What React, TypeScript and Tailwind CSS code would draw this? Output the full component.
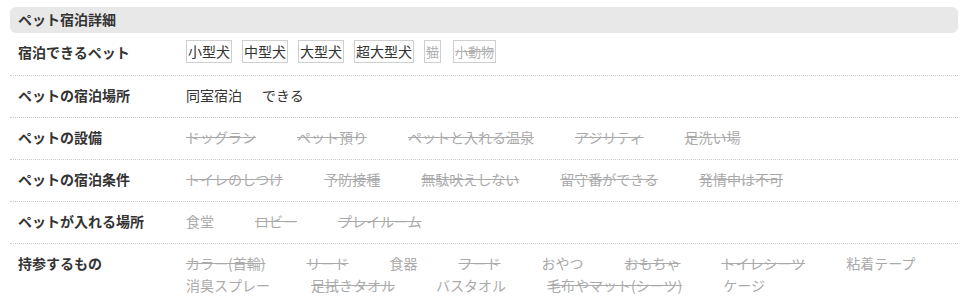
type Item = { t: string; off?: boolean };

const rows: { label: string; items: Item[] }[] = [
  {
    label: 'ペットの設備',
    items: [
      { t: 'ドッグラン', off: true },
      { t: 'ペット預り', off: true },
      { t: 'ペットと入れる温泉', off: true },
      { t: 'アジリティ', off: true },
      { t: '足洗い場', off: true },
    ],
  },
  {
    label: 'ペットの宿泊条件',
    items: [
      { t: 'トイレのしつけ', off: true },
      { t: '予防接種', off: true },
      { t: '無駄吠えしない', off: true },
      { t: '留守番ができる', off: true },
      { t: '発情中は不可', off: true },
    ],
  },
  {
    label: 'ペットが入れる場所',
    items: [{ t: '食堂' }, { t: 'ロビー', off: true }, { t: 'プレイルーム', off: true }],
  },
  {
    label: '持参するもの',
    items: [
      { t: 'カラー(首輪)', off: true },
      { t: 'リード', off: true },
      { t: '食器' },
      { t: 'フード', off: true },
      { t: 'おやつ' },
      { t: 'おもちゃ', off: true },
      { t: 'トイレシーツ', off: true },
      { t: '粘着テープ' },
      { t: '消臭スプレー' },
      { t: '足拭きタオル', off: true },
      { t: 'バスタオル' },
      { t: '毛布やマット(シーツ)', off: true },
      { t: 'ケージ' },
    ],
  },
];

const sizes: Item[] = [
  { t: '小型犬' },
  { t: '中型犬' },
  { t: '大型犬' },
  { t: '超大型犬' },
  { t: '猫', off: true },
  { t: '小動物', off: true },
];

function Row({ label, children }: { label: string; children: React.ReactNode }) {
  return (
    <div className="flex border-b border-dotted border-[#c8c8c8] pt-[8px] pb-[11px]">
      <div className="w-[176px] shrink-0 pl-[8px] font-bold leading-[22px] text-[#333]">{label}</div>
      <div className="flex flex-1 flex-wrap leading-[22px]">{children}</div>
    </div>
  );
}

export default function App() {
  return (
    <div
      className="w-[977px] h-[304px] overflow-hidden bg-white pt-[7px] pl-[10px] pr-[19px] text-[14px]"
      style={{ fontFamily: '"Noto Sans CJK JP", "Noto Sans", sans-serif' }}
    >
      <div className="h-[26px] rounded-[6px] bg-[#e8e8e8] pl-[8px] font-bold leading-[25px] text-[#333]">
        ペット宿泊詳細
      </div>

      <div className="flex border-b border-dotted border-[#c8c8c8] pt-[7px] pb-[12px]">
        <div className="w-[176px] shrink-0 pl-[8px] pt-px font-bold leading-[22px] text-[#333]">
          宿泊できるペット
        </div>
        <div className="flex flex-1 items-center">
          {sizes.map((s) => (
            <span
              key={s.t}
              className={
                s.off
                  ? 'mr-[12px] h-[23px] border border-[#cfcfcf] px-px text-[13px] leading-[21px] text-[#b0b0b0] line-through'
                  : 'mr-[10px] h-[23px] border border-[#cfcfcf] px-px leading-[21px] text-[#333]'
              }
            >
              {s.t}
            </span>
          ))}
        </div>
      </div>

      <Row label="ペットの宿泊場所">
        <span className="text-[#333]">同室宿泊</span>
        <span className="ml-[20px] text-[#333]">できる</span>
      </Row>

      {rows.map((r) => (
        <Row key={r.label} label={r.label}>
          {r.items.map((it) => (
            <span
              key={it.t}
              className={it.off ? 'mr-[41px] text-[#aaaaaa] line-through' : 'mr-[41px] text-[#aaaaaa]'}
            >
              {it.t}
            </span>
          ))}
        </Row>
      ))}
    </div>
  );
}
